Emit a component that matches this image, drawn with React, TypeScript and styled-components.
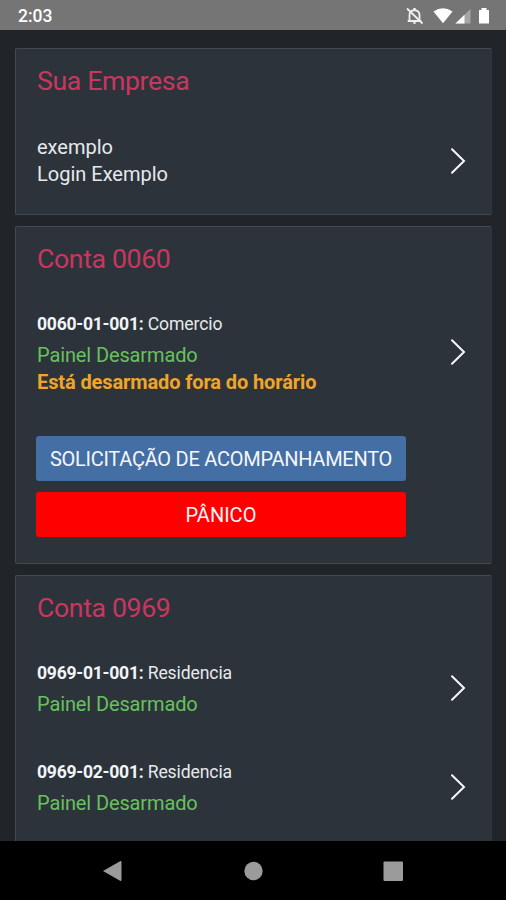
import React from "react";
import styled, { createGlobalStyle } from "styled-components";

const GlobalStyle = createGlobalStyle`
  * { box-sizing: border-box; }
  body { margin: 0; background: #000; font-family: Roboto, sans-serif; }
`;

const Screen = styled.div`
  display: flex;
  flex-direction: column;
  width: 506px;
  height: 900px;
  overflow: hidden;
  background: #212529;
`;

const StatusBar = styled.header`
  display: flex;
  flex: none;
  align-items: center;
  justify-content: space-between;
  height: 30px;
  padding: 2px 15px 0 18px;
  background: #757575;
  color: #fff;
`;

const Clock = styled.span`
  font-size: 17.5px;
  font-weight: 500;
  line-height: 28px;
`;

const StatusIcons = styled.svg`
  display: block;
  width: 86px;
  height: 20px;
`;

const Content = styled.main`
  display: flex;
  flex: 1;
  flex-direction: column;
  gap: 11px;
  min-height: 0;
  padding: 18px 14px 0 15px;
  overflow: hidden;
`;

const Card = styled.section<{ $height: number }>`
  flex: none;
  height: ${(p) => p.$height}px;
  border: 1px solid #434950;
  border-right-color: #2f363d;
  border-radius: 2px;
  background: #2c333b;
`;

const CardTitle = styled.h2`
  height: 69px;
  margin: 0;
  padding: 18px 0 0 21px;
  color: #c9375f;
  font-size: 26.7px;
  font-weight: 400;
  line-height: 28px;
  letter-spacing: -0.38px;
`;

const Row = styled.div<{ $top?: number; $height?: number }>`
  display: flex;
  align-items: flex-start;
  justify-content: space-between;
  height: ${(p) => p.$height ?? 99}px;
  padding: ${(p) => p.$top ?? 13}px 25px 0 21px;
`;

const RowBody = styled.div`
  display: flex;
  align-items: center;
  justify-content: space-between;
  width: 100%;
`;

const Line = styled.div<{ $color?: string; $bold?: boolean; $spacing?: number }>`
  color: ${(p) => p.$color ?? "#e6e9ec"};
  font-size: 20px;
  font-weight: ${(p) => (p.$bold ? 700 : 400)};
  line-height: 27px;
  letter-spacing: ${(p) => p.$spacing ?? 0}px;
  white-space: nowrap;
`;

const Name = styled.div`
  padding-top: 1px;
  margin-bottom: 2.5px;
  color: #e6e9ec;
  font-size: 17.6px;
  line-height: 29px;
  letter-spacing: -0.12px;
  white-space: nowrap;

  b {
    color: #f2f5f8;
    font-weight: 700;
    letter-spacing: -0.27px;
  }
`;

const ChevronIcon = styled.svg`
  flex: none;
  width: 17px;
  height: 28px;
`;

const Actions = styled.div`
  display: flex;
  flex-direction: column;
  gap: 11px;
  width: 370px;
  margin-left: 20px;
`;

const ActionButton = styled.button<{ $color: string; $spacing?: number }>`
  height: 45px;
  padding: 1px 0 0;
  border: 0;
  border-radius: 3px;
  background: ${(p) => p.$color};
  color: #f4f6fa;
  font: 400 20px/44px Roboto, sans-serif;
  letter-spacing: ${(p) => p.$spacing ?? 0}px;
  white-space: nowrap;
`;

const NavBar = styled.nav`
  display: flex;
  flex: none;
  align-items: center;
  justify-content: space-between;
  height: 59px;
  padding: 0 102px;
  background: #000;
`;

const NavIcon = styled.svg`
  width: 21px;
  height: 22px;
  fill: #9b9b9b;
`;

const Chevron = () => (
  <ChevronIcon viewBox="0 0 17 28" fill="none" stroke="#f6f8fa" strokeWidth="2" strokeLinecap="round">
    <path d="M3 2.2 L15 14 L3 25.8" />
  </ChevronIcon>
);

const PanelRow = ({ code, name, alert, height }: { code: string; name: string; alert?: string; height?: number }) => (
  <Row $height={height}>
    <RowBody>
      <div>
        <Name>
          <b>{code}:</b> {name}
        </Name>
        <Line $color="#68c15c" $spacing={-0.12}>Painel Desarmado</Line>
        {alert && <Line $color="#f0a528" $bold $spacing={-0.11}>{alert}</Line>}
      </div>
      <Chevron />
    </RowBody>
  </Row>
);

export default function App() {
  return (
    <Screen>
      <GlobalStyle />
      <StatusBar>
        <Clock>2:03</Clock>
        <StatusIcons viewBox="0 0 86 20">
          <g fill="none" stroke="#f0f0f0" strokeWidth="1.8">
            <path d="M4.5 14.5V9Q4.5 4.8 9.5 4.2Q14.5 4.8 14.5 9V14.5M2.7 15H16.3" />
            <path d="M9.5 2V4" strokeWidth="2.4" />
            <path d="M2 2.5L17.5 17.5" />
          </g>
          <path d="M7.8 16.2H11.2Q11 18 9.5 18Q8 18 7.8 16.2Z" fill="#f0f0f0" />
          <path d="M28.5 5.5Q38 -0.8 47.5 5.5L38 17.2Z" fill="#fff" />
          <path d="M65.5 3V17.5H50.5Z" fill="#a5a5a5" />
          <path d="M59.5 8.8V17.5H50.5Z" fill="#fff" />
          <path d="M76.5 2H81.5V4H84V17.5H74V4H76.5Z" fill="#fff" />
        </StatusIcons>
      </StatusBar>
      <Content>
        <Card $height={167}>
          <CardTitle>Sua Empresa</CardTitle>
          <Row $top={16}>
            <RowBody>
              <div>
                <Line>exemplo</Line>
                <Line>Login Exemplo</Line>
              </div>
              <Chevron />
            </RowBody>
          </Row>
        </Card>
        <Card $height={338}>
          <CardTitle>Conta 0060</CardTitle>
          <PanelRow code="0060-01-001" name="Comercio" alert="Está desarmado fora do horário" height={139.5} />
          <Actions>
            <ActionButton $color="#446fa5" $spacing={-0.26}>SOLICITAÇÃO DE ACOMPANHAMENTO</ActionButton>
            <ActionButton $color="#ff0000">PÂNICO</ActionButton>
          </Actions>
        </Card>
        <Card $height={300}>
          <CardTitle>Conta 0969</CardTitle>
          <PanelRow code="0969-01-001" name="Residencia" />
          <PanelRow code="0969-02-001" name="Residencia" />
        </Card>
      </Content>
      <NavBar>
        <NavIcon viewBox="0 0 21 22"><path d="M1 11L18.5 1Q19.5 .7 19.5 2V20Q19.5 21.3 18.5 21Z" /></NavIcon>
        <NavIcon viewBox="0 0 21 22"><circle cx="10.5" cy="11" r="9.2" /></NavIcon>
        <NavIcon viewBox="0 0 21 22"><rect x="0.5" y="1.5" width="19.5" height="19.5" rx="1" /></NavIcon>
      </NavBar>
    </Screen>
  );
}
